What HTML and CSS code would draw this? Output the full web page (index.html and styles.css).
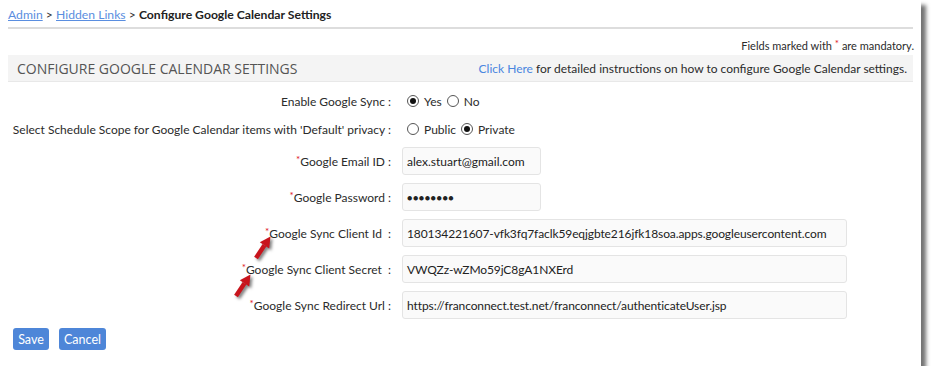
FILE: index.html
```html
<!DOCTYPE html>
<html>
<head>
<meta charset="utf-8">
<link rel="stylesheet" href="styles.css">
</head>
<body>
<div class="card">
  <div class="crumbs"><a href="#">Admin</a> &gt; <a href="#">Hidden Links</a> &gt; <b>Configure Google Calendar Settings</b></div>
  <div class="mand">Fields marked with <span class="req">*</span> are mandatory.</div>
  <div class="bar">
    <span class="title">CONFIGURE GOOGLE CALENDAR SETTINGS</span>
    <span class="help"><a href="#">Click Here</a> for detailed instructions on how to configure Google Calendar settings.</span>
  </div>
  <div class="form">
    <div class="lbl">Enable Google Sync :</div>
    <div class="ctl"><span class="radio on"></span>Yes <span class="radio"></span>No</div>
    <div class="lbl">Select Schedule Scope for Google Calendar items with 'Default' privacy :</div>
    <div class="ctl"><span class="radio"></span>Public <span class="radio on"></span>Private</div>
    <div class="lbl"><span class="req">*</span>Google Email ID :</div>
    <div class="ctl"><div class="inp short">alex.stuart@gmail.com</div></div>
    <div class="lbl"><span class="req">*</span>Google Password :</div>
    <div class="ctl"><div class="inp short dots">&#9679;&#9679;&#9679;&#9679;&#9679;&#9679;&#9679;&#9679;</div></div>
    <div class="lbl"><span class="req">*</span>Google Sync Client Id &nbsp;:</div>
    <div class="ctl"><div class="inp long">180134221607-vfk3fq7faclk59eqjgbte216jfk18soa.apps.googleusercontent.com</div></div>
    <div class="lbl"><span class="req">*</span>Google Sync Client Secret &nbsp;:</div>
    <div class="ctl"><div class="inp long">VWQZz-wZMo59jC8gA1NXErd</div></div>
    <div class="lbl"><span class="req">*</span>Google Sync Redirect Url :</div>
    <div class="ctl"><div class="inp long">https://franconnect.test.net/franconnect/authenticateUser.jsp</div></div>
  </div>
  <div class="btns"><button class="btn save">Save</button><button class="btn">Cancel</button></div>
  <svg class="arrow a1" width="24" height="26" viewBox="0 0 24 26"><path d="M3 22 L11.5 9.3" stroke="#c8141c" stroke-width="4.5" fill="none"/><path d="M17.5 0.5 L6.8 6.2 L16.2 12.4 Z" fill="#c8141c"/></svg>
  <svg class="arrow a2" width="24" height="26" viewBox="0 0 24 26"><path d="M3 22 L11.5 9.3" stroke="#c8141c" stroke-width="4.5" fill="none"/><path d="M17.5 0.5 L6.8 6.2 L16.2 12.4 Z" fill="#c8141c"/></svg>
</div>
</body>
</html>
```
FILE: styles.css
```css
html, body { margin: 0; padding: 0; background: #fff; }
body { font-family: Lato, "Liberation Sans", sans-serif; font-size: 12px; color: #2b2b2b; }
.card {
  position: relative;
  width: 921px;
  height: 366px;
  background: #fff;
  box-shadow: 5px 5px 4px rgba(0,0,0,0.55);
  box-sizing: border-box;
  padding: 0 8px 0 8px;
}
a { color: #4a7fd6; }
.crumbs { padding-top: 7px; height: 20px; border-bottom: 2px solid #ddd; font-size: 12.2px; color: #333; }
.crumbs a { color: #5a8ee0; text-decoration: underline; }
.crumbs b { color: #222; }
.mand { text-align: right; font-size: 11px; padding-top: 8px; height: 18px; margin-right: -1px; }
.req { color: #e0101e; }
.mand .req { font-size: 10px; vertical-align: 3px; }
.bar {
  display: flex; justify-content: space-between; align-items: center;
  height: 26px; background: #f4f4f4; border-bottom: 1px solid #e8e8e8;
  padding: 0 6px 0 9px;
}
.title { font-family: "Open Sans", sans-serif; font-size: 14px; color: #555; }
.help { font-size: 12px; }
.help a { text-decoration: none; color: #4a86e0; }
.form { display: grid; grid-template-columns: 383px 1fr; column-gap: 11px; grid-template-rows: 28px 28px repeat(5, 36px); margin-top: 5px; }
.lbl { text-align: right; display: flex; align-items: center; justify-content: flex-end; white-space: nowrap; }
.lbl .req { font-size: 10px; align-self: flex-start; margin-top: 10px; }
.ctl { display: flex; align-items: center; }
.radio { width: 12px; height: 12px; border: 1px solid #555; border-radius: 50%; box-sizing: border-box; margin: 0 5px 0 5px; position: relative; background: #fff; }
.radio.on::after { content: ""; position: absolute; left: 2px; top: 2px; width: 6px; height: 6px; border-radius: 50%; background: #111; }
.inp { height: 28px; box-sizing: border-box; border: 1px solid #e4e4e4; border-radius: 3px; background: #fafafa; display: flex; align-items: center; padding-left: 4px; color: #222; font-size: 12px; white-space: nowrap; overflow: hidden; }
.long { letter-spacing: -0.1px; }
.short { width: 139px; }
.long { width: 445px; }
.dots { font-size: 9px; letter-spacing: 0.5px; }
.btns { display: flex; gap: 10px; padding-left: 5px; margin-top: 5px; }
.btn { background: #4e86d8; color: #fff; border: none; border-radius: 3px; height: 22px; padding: 0 5px; font-family: Lato, sans-serif; font-size: 12.5px; }
.save { width: 36px; padding: 0; }
.arrow { position: absolute; filter: drop-shadow(2px 2px 1.5px rgba(0,0,0,0.5)); }
.a1 { left: 253px; top: 236px; }
.a2 { left: 233px; top: 274px; }
```
